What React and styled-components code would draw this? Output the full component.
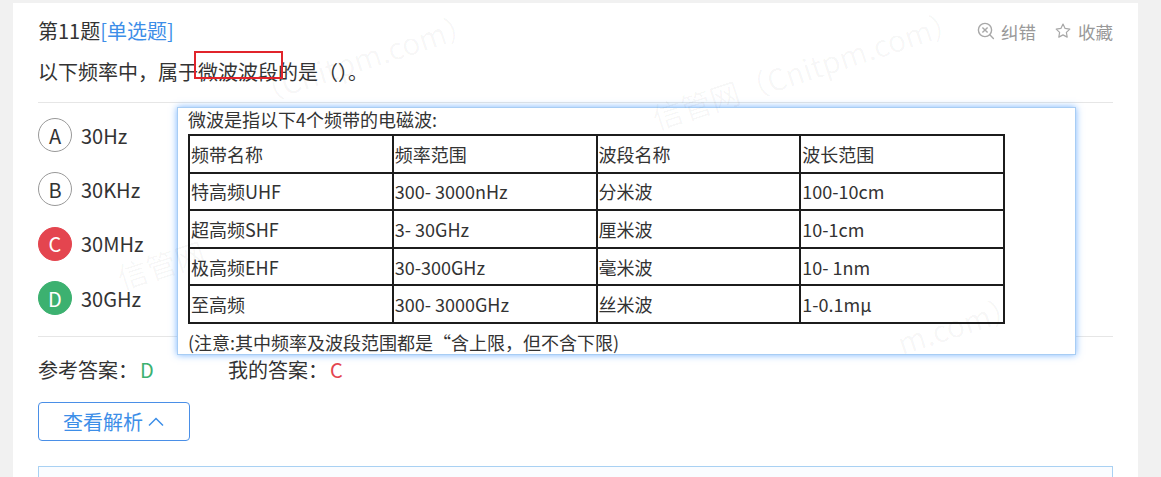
import React from "react";
import styled, { createGlobalStyle } from "styled-components";

const GlobalStyle = createGlobalStyle`
  html, body {
    margin: 0;
    padding: 0;
    background: #f1f1f1;
    font-family: "Noto Sans CJK SC", "Microsoft YaHei", sans-serif;
    color: #333;
  }
`;

const BLUE = "#3d8ee8";
const RED = "#e4454f";
const GREEN = "#3cb170";

const Page = styled.div`
  padding: 3px 23px 0 13px;
  height: 477px;
  overflow: hidden;
  box-sizing: border-box;
`;

const Card = styled.div`
  position: relative;
  background: #fff;
  padding: 13px 25px 0;
  height: 480px;
`;

const Header = styled.div`
  display: flex;
  align-items: center;
  justify-content: space-between;
  height: 30px;
`;

const Title = styled.div`
  font-size: 20px;
  line-height: 30px;
  color: #333;
`;

const Kind = styled.span`
  color: ${BLUE};
`;

const Actions = styled.div`
  display: flex;
  align-items: center;
  gap: 18px;
  font-size: 17.5px;
  color: #999;
`;

const Action = styled.span`
  display: flex;
  align-items: center;
  gap: 6px;
`;

const Question = styled.div`
  margin-top: 11px;
  font-size: 20px;
  line-height: 30px;
`;

const Mark = styled.span`
  position: relative;
  &::after {
    content: "";
    position: absolute;
    left: -4px;
    right: -5px;
    top: -6px;
    height: 24px;
    border: 2px solid #e1242b;
  }
`;

const Rule = styled.div`
  height: 1px;
  background: #e6e6e6;
  margin-top: ${(p) => p.top}px;
`;

const Options = styled.div`
  display: flex;
  flex-direction: column;
  gap: 20.4px;
  padding: 15px 0 21px;
`;

const Option = styled.div`
  display: flex;
  align-items: center;
  gap: 9px;
  font-size: 20px;
  height: 34px;
`;

const Badge = styled.span`
  width: 34px;
  height: 34px;
  box-sizing: border-box;
  border-radius: 50%;
  display: flex;
  align-items: center;
  justify-content: center;
  font-size: 20px;
  border: 1px solid ${(p) => (p.fill ? p.fill : "#999")};
  background: ${(p) => p.fill || "#fff"};
  color: ${(p) => (p.fill ? "#fff" : "#333")};
`;

const Answers = styled.div`
  display: flex;
  margin-top: 18px;
  font-size: 20px;
  line-height: 30px;
`;

const AnswerItem = styled.span`
  width: 190px;
`;

const AnswerValue = styled.span`
  color: ${(p) => p.color};
  margin-left: 2px;
`;

const ToggleButton = styled.button`
  margin-top: 17px;
  width: 152px;
  height: 39px;
  box-sizing: border-box;
  border: 1px solid #4a8fe7;
  border-radius: 4px;
  background: #fff;
  color: ${BLUE};
  font-family: inherit;
  font-size: 20px;
  display: flex;
  align-items: center;
  justify-content: flex-start;
  padding: 0 0 0 24px;
  gap: 4px;
`;

const Analysis = styled.div`
  margin-top: 25px;
  height: 120px;
  border: 1px solid #a9d1f3;
  background: #fafcff;
`;

const Popup = styled.div`
  position: absolute;
  left: 164px;
  top: 104px;
  width: 899px;
  box-sizing: border-box;
  background: #fff;
  border: 1px solid #a8cdf4;
  box-shadow: 0 0 7px rgba(64, 150, 255, 0.7);
  padding: 0 10px;
  font-size: 18px;
  color: #333;
  z-index: 2;
`;

const PopupLine = styled.div`
  margin-top: ${(p) => p.top || 0}px;
  height: ${(p) => p.h || 22}px;
  line-height: ${(p) => p.h || 22}px;
`;

const Table = styled.table`
  margin-top: 4px;
  border-collapse: collapse;
  width: 817px;
  table-layout: fixed;
`;

const Cell = styled.td`
  border: 2px solid #1c1c1c;
  height: 35.6px;
  padding: 0 0 0 1px;
  font-size: 18px;
  line-height: 34px;
  white-space: nowrap;
`;

const Watermark = styled.span`
  position: absolute;
  left: ${(p) => p.x}px;
  top: ${(p) => p.y}px;
  font-size: 30px;
  line-height: 30px;
  white-space: nowrap;
  color: rgba(0, 0, 0, 0.035);
  transform: rotate(-18deg);
  transform-origin: left center;
  pointer-events: none;
  z-index: 3;
`;

const ErrorIcon = () => (
  <svg width="18" height="18" viewBox="0 0 18 18" fill="none" stroke="#a8a8a8" strokeWidth="1.4">
    <circle cx="8" cy="8" r="6.6" />
    <path d="M5.4 5.4l5.2 5.2M10.6 5.4l-5.2 5.2" />
    <path d="M12.8 12.8l3.6 3.6" strokeLinecap="round" />
  </svg>
);

const StarIcon = () => (
  <svg width="18" height="18" viewBox="0 0 24 24" fill="none" stroke="#a8a8a8" strokeWidth="1.6" strokeLinejoin="round">
    <path d="M12 2.8l2.8 5.8 6.3.9-4.6 4.4 1.1 6.3L12 17.2l-5.6 3 1.1-6.3-4.6-4.4 6.3-.9z" />
  </svg>
);

const ChevronUp = () => (
  <svg width="18" height="18" viewBox="0 0 18 18" fill="none" stroke={BLUE} strokeWidth="1.5">
    <path d="M2 12.5l7-7 7 7" />
  </svg>
);

const options = [
  { key: "A", text: "30Hz" },
  { key: "B", text: "30KHz" },
  { key: "C", text: "30MHz", fill: RED },
  { key: "D", text: "30GHz", fill: GREEN },
];

const rows = [
  ["频带名称", "频率范围", "波段名称", "波长范围"],
  ["特高频UHF", "300- 3000nHz", "分米波", "100-10cm"],
  ["超高频SHF", "3- 30GHz", "厘米波", "10-1cm"],
  ["极高频EHF", "30-300GHz", "毫米波", "10- 1nm"],
  ["至高频", "300- 3000GHz", "丝米波", "1-0.1mμ"],
];

export default function App() {
  return (
    <Page>
      <GlobalStyle />
      <Card>
        <Header>
          <Title>
            第11题<Kind>[单选题]</Kind>
          </Title>
          <Actions>
            <Action>
              <ErrorIcon />
              纠错
            </Action>
            <Action>
              <StarIcon />
              收藏
            </Action>
          </Actions>
        </Header>
        <Question>
          以下频率中，属于<Mark>微波波段</Mark>的是（）。
        </Question>
        <Rule top={15} />
        <Options>
          {options.map((o) => (
            <Option key={o.key}>
              <Badge fill={o.fill}>{o.key}</Badge>
              {o.text}
            </Option>
          ))}
        </Options>
        <Rule top={0} />
        <Answers>
          <AnswerItem>
            参考答案：<AnswerValue color={GREEN}>D</AnswerValue>
          </AnswerItem>
          <AnswerItem>
            我的答案：<AnswerValue color={RED}>C</AnswerValue>
          </AnswerItem>
        </Answers>
        <ToggleButton>
          查看解析
          <ChevronUp />
        </ToggleButton>
        <Analysis />

        <Popup>
          <PopupLine>微波是指以下4个频带的电磁波:</PopupLine>
          <Table>
            <tbody>
              {rows.map((r, i) => (
                <tr key={i}>
                  {r.map((c, j) => (
                    <Cell key={j}>{c}</Cell>
                  ))}
                </tr>
              ))}
            </tbody>
          </Table>
          <PopupLine top={6} h={24}>
            (注意:其中频率及波段范围都是“含上限，但不含下限)
          </PopupLine>
        </Popup>

        <Watermark x={240} y={75}>（Cnitpm.com）</Watermark>
        <Watermark x={640} y={100}>信管网（Cnitpm.com）</Watermark>
        <Watermark x={105} y={260}>信管网</Watermark>
        <Watermark x={885} y={325}>m.com）</Watermark>
      </Card>
    </Page>
  );
}
